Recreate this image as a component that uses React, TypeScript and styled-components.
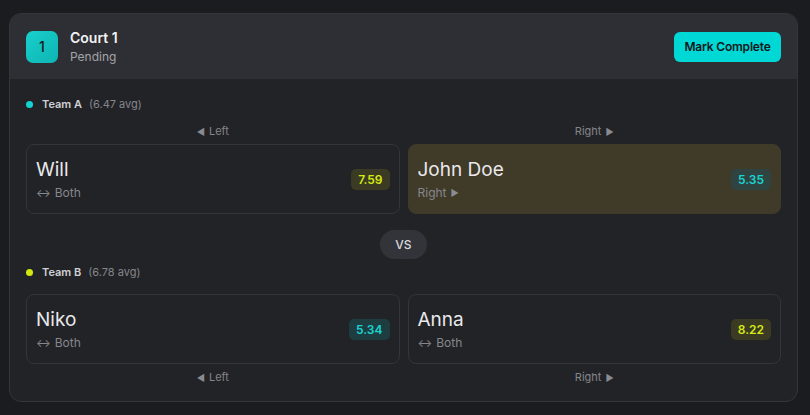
import React from "react";
import styled, { createGlobalStyle } from "styled-components";

const Global = createGlobalStyle`
  html, body { margin: 0; padding: 0; background: #1b1c20; }
  body { font-family: Inter, "Noto Sans", sans-serif; -webkit-font-smoothing: antialiased; }
  * { box-sizing: border-box; }
`;

const Page = styled.div`
  padding: 13px 12px 14px 9px;
`;

const Card = styled.div`
  border: 1px solid #34353b;
  border-radius: 12px;
  background: #222327;
  overflow: hidden;
`;

const Header = styled.div`
  height: 65px;
  display: flex;
  align-items: center;
  justify-content: space-between;
  padding: 0 16px;
  background: #2e2f34;
`;

const HeaderLeft = styled.div`
  display: flex;
  align-items: center;
  gap: 12px;
`;

const NumBadge = styled.div`
  width: 32px;
  height: 32px;
  border-radius: 7px;
  background: linear-gradient(135deg, #19cfcc 0%, #0db5b3 100%);
  display: flex;
  align-items: center;
  justify-content: center;
  color: #15181a;
  font-size: 14px;
  font-weight: 500;
`;

const TitleBlock = styled.div`
  display: flex;
  flex-direction: column;
  gap: 2px;
`;

const Title = styled.div`
  color: #f2f2f3;
  font-size: 14px;
  font-weight: 600;
  line-height: 18px;
`;

const Status = styled.div`
  color: #a3a4a8;
  font-size: 12px;
  line-height: 15px;
`;

const Button = styled.button`
  height: 30px;
  width: 107px;
  padding: 0;
  border: none;
  border-radius: 6px;
  background: #00d8d6;
  color: #14171a;
  font-family: inherit;
  font-size: 12px;
  font-weight: 600;
  letter-spacing: -0.2px;
`;

const Body = styled.div`
  padding: 18px 16px 17px;
  display: flex;
  flex-direction: column;
`;

const TeamRow = styled.div`
  display: flex;
  align-items: center;
  height: 14px;
`;

const Dot = styled.span<{ $color: string }>`
  width: 7px;
  height: 7px;
  border-radius: 50%;
  background: ${(p) => p.$color};
  margin-right: 9px;
`;

const TeamName = styled.span`
  color: #cfd0d3;
  font-size: 11px;
  font-weight: 600;
`;

const Avg = styled.span`
  color: #85868b;
  font-size: 11px;
  margin-left: 7px;
`;

const Grid = styled.div<{ $mt?: number; $mb?: number }>`
  display: grid;
  grid-template-columns: 1fr 1fr;
  column-gap: 8px;
  margin-top: ${(p) => p.$mt ?? 0}px;
  margin-bottom: ${(p) => p.$mb ?? 0}px;
`;

const SideLabel = styled.div`
  display: flex;
  justify-content: center;
  align-items: center;
  gap: 4px;
  height: 14px;
  color: #84858a;
  font-size: 11px;
`;

const Tri = styled.span`
  font-size: 9px;
  color: #8a8b90;
`;

const Player = styled.div<{ $active?: boolean }>`
  height: 70px;
  border-radius: 8px;
  border: 1px solid ${(p) => (p.$active ? "#403a29" : "#34353a")};
  background: ${(p) => (p.$active ? "#403a29" : "#222327")};
  display: flex;
  align-items: center;
  justify-content: space-between;
  padding: 0 9px;
`;

const PlayerInfo = styled.div`
  display: flex;
  flex-direction: column;
  gap: 4px;
  padding-top: 1px;
`;

const Name = styled.div`
  color: #e9e9eb;
  font-size: 19px;
  line-height: 23px;
  font-weight: 400;
`;

const Sub = styled.div`
  color: #86878c;
  font-size: 12px;
  line-height: 16px;
  display: flex;
  align-items: center;
  gap: 4px;
`;

const Arrow = styled.span`
  font-size: 11px;
`;

const Rating = styled.div<{ $kind: "yellow" | "cyan"; $active?: boolean }>`
  height: 21px;
  min-width: 38px;
  padding: 0 7px;
  border-radius: 5px;
  display: flex;
  align-items: center;
  justify-content: center;
  font-size: 12px;
  font-weight: 600;
  color: ${(p) => (p.$kind === "yellow" ? "#d6ea14" : "#19d4d1")};
  background: ${(p) =>
    p.$active ? "#2f4340" : p.$kind === "yellow" ? "#3b3a23" : "#1e3d40"};
`;

const VsRow = styled.div`
  display: flex;
  justify-content: center;
  margin-top: 16px;
  margin-bottom: 6px;
`;

const Vs = styled.div`
  width: 47px;
  height: 29px;
  border-radius: 15px;
  background: #33343a;
  color: #d8d9dc;
  font-size: 12px;
  font-weight: 500;
  display: flex;
  align-items: center;
  justify-content: center;
`;

type P = {
  name: string;
  side: "both" | "right";
  rating: string;
  kind: "yellow" | "cyan";
  active?: boolean;
};

const PlayerCard = ({ name, side, rating, kind, active }: P) => (
  <Player $active={active}>
    <PlayerInfo>
      <Name>{name}</Name>
      <Sub>
        {side === "both" ? (
          <>
            <Arrow>↔</Arrow>
            <span>Both</span>
          </>
        ) : (
          <>
            <span>Right</span>
            <Tri>▶</Tri>
          </>
        )}
      </Sub>
    </PlayerInfo>
    <Rating $kind={kind} $active={active}>
      {rating}
    </Rating>
  </Player>
);

const Labels = ({ mt, mb }: { mt?: number; mb?: number }) => (
  <Grid $mt={mt} $mb={mb}>
    <SideLabel>
      <Tri>◀</Tri>
      <span>Left</span>
    </SideLabel>
    <SideLabel>
      <span>Right</span>
      <Tri>▶</Tri>
    </SideLabel>
  </Grid>
);

export default function App() {
  return (
    <Page>
      <Global />
      <Card>
        <Header>
          <HeaderLeft>
            <NumBadge>1</NumBadge>
            <TitleBlock>
              <Title>Court 1</Title>
              <Status>Pending</Status>
            </TitleBlock>
          </HeaderLeft>
          <Button>Mark Complete</Button>
        </Header>
        <Body>
          <TeamRow>
            <Dot $color="#13d3d0" />
            <TeamName>Team A</TeamName>
            <Avg>(6.47 avg)</Avg>
          </TeamRow>
          <Labels mt={13} mb={6} />
          <Grid>
            <PlayerCard name="Will" side="both" rating="7.59" kind="yellow" />
            <PlayerCard name="John Doe" side="right" rating="5.35" kind="cyan" active />
          </Grid>
          <VsRow>
            <Vs>VS</Vs>
          </VsRow>
          <TeamRow>
            <Dot $color="#d3e80f" />
            <TeamName>Team B</TeamName>
            <Avg>(6.78 avg)</Avg>
          </TeamRow>
          <Grid $mt={15}>
            <PlayerCard name="Niko" side="both" rating="5.34" kind="cyan" />
            <PlayerCard name="Anna" side="both" rating="8.22" kind="yellow" />
          </Grid>
          <Labels mt={6} />
        </Body>
      </Card>
    </Page>
  );
}
